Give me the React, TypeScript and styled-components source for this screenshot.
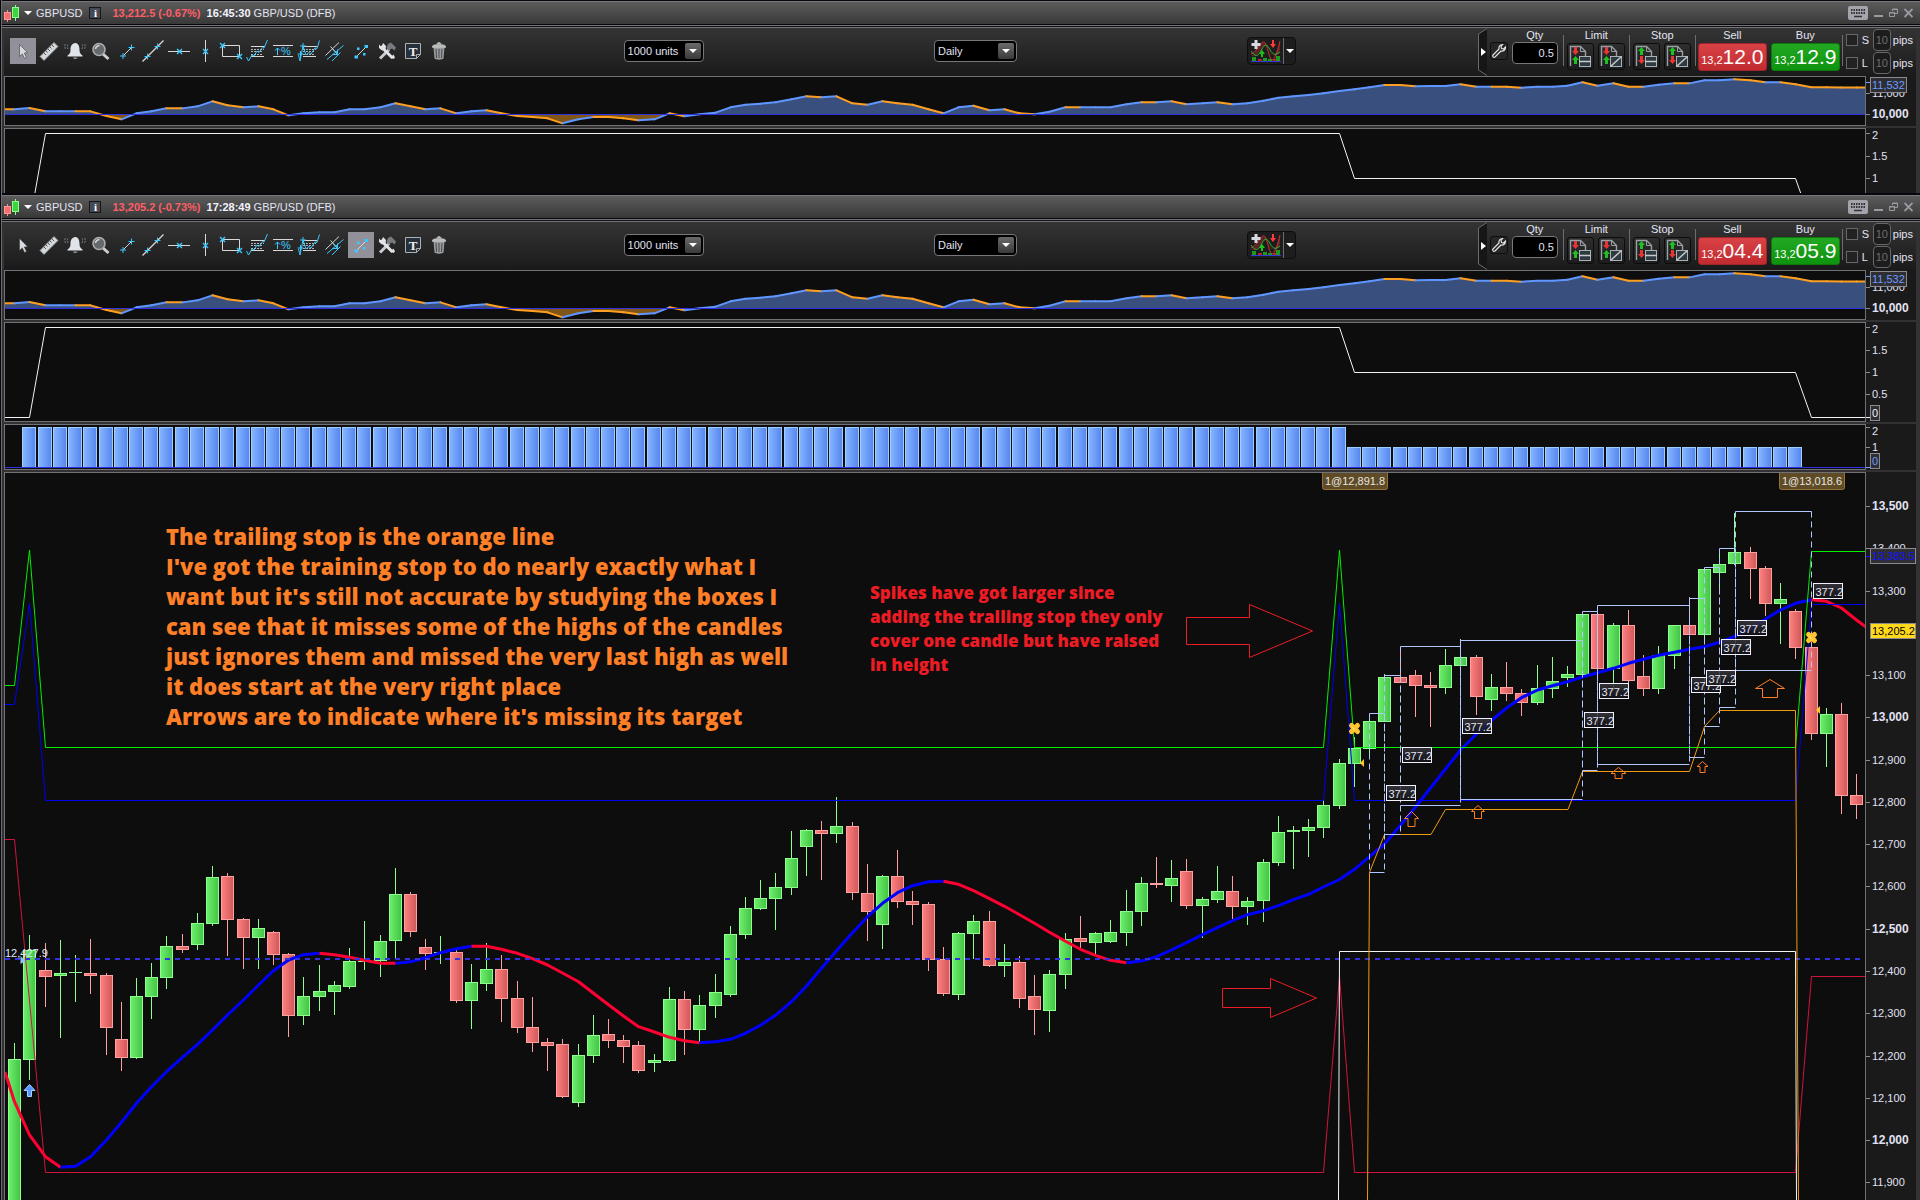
import React from "react";
import styled, { createGlobalStyle } from "styled-components";

const UI = `"Liberation Sans", Arial, sans-serif`;

const GlobalStyle = createGlobalStyle`
  * { box-sizing: border-box; }
  html, body, #root { height: 100%; }
  body { margin: 0; background: #07070c; overflow: hidden; font: 11px/14px ${UI}; color: #e4e4f4; }
  button, input, select { font: inherit; color: inherit; margin: 0; }
  svg { display: block; }
`;

/* ---------- shell ---------- */

const Page = styled.main`
  display: flex;
  flex-direction: column;
  height: 100%;
  padding-left: 1px;
`;

const Window = styled.section<{ $fill?: boolean }>`
  display: flex;
  flex-direction: column;
  flex: ${p => (p.$fill ? "1 1 0" : "none")};
  min-height: 0;
  padding: 1px 0 ${p => (p.$fill ? 0 : 1)}px;
  border-left: 1px solid #6c6c70;
  background: #07070c;
`;

const TitleBar = styled.header`
  display: flex;
  align-items: center;
  height: 23px;
  margin-bottom: 1px;
  padding: 0 7px 0 2px;
  border-top: 1px solid #77777b;
  background: linear-gradient(#5c5c5c, #383838);
`;

const Symbol = styled.button`
  display: flex;
  align-items: center;
  gap: 4px;
  padding: 0;
  border: 0;
  background: none;
`;

const InfoButton = styled.button`
  width: 12px;
  height: 12px;
  margin: 0 11px 0 7px;
  padding: 0;
  border: 1px solid #15151c;
  background: #454a55;
  color: #fff;
  font: bold 11px/10px "Liberation Serif", serif;
`;

const Quote = styled.strong<{ $down?: boolean }>`
  margin-right: ${p => (p.$down ? 6 : 3)}px;
  color: ${p => (p.$down ? "#ff5f66" : "#f4f4ff")};
`;

const WindowButtons = styled.div`
  display: flex;
  align-items: center;
  gap: 6px;
  margin-left: auto;
`;

const GhostButton = styled.button`
  padding: 0;
  border: 0;
  background: none;
  color: #9a9aa2;
`;

const Rule = styled.div`
  height: 3px;
  border-top: 1px solid #73737a;
  border-bottom: 1px solid #73737a;
  background: #111;
`;

const Body = styled.div`
  display: flex;
  flex-direction: column;
  flex: 1;
  min-height: 0;
  padding: 0 4px 0 2px;
  background: #333134;
`;

/* ---------- toolbar ---------- */

const Toolbar = styled.div`
  display: grid;
  grid-template-columns: 1fr auto 1fr;
  height: 48px;
  background: linear-gradient(#343434, #1a1a1a);
`;

const Tools = styled.div`
  display: flex;
  align-items: center;
  padding: 0 0 2px 6px;
`;

const Tool = styled.button<{ $active?: boolean }>`
  width: 26px;
  height: 26px;
  padding: 0;
  border: 0;
  background: ${p => (p.$active ? "#929199" : "none")};
`;

const Centre = styled.div`
  display: flex;
  align-items: center;
  gap: 12vw;
  padding-bottom: 2px;
`;

const Picker = styled.label<{ $w: number }>`
  display: grid;
  align-items: center;
  width: ${p => p.$w}px;
  height: 22px;
  border: 1px solid #77777c;
  border-radius: 4px;
  background: #000;
  > * { grid-area: 1 / 1; }
`;

const PickerSelect = styled.select`
  width: 100%;
  height: 20px;
  padding: 0 0 0 3px;
  border: 0;
  background: none;
  appearance: none;
  outline: 0;
`;

const PickerArrow = styled.span`
  justify-self: end;
  margin-right: 2px;
  padding: 6px 4px;
  border-radius: 2px;
  background: linear-gradient(#6a6a6a, #3a3a3a);
  pointer-events: none;
`;

const IndicatorGroup = styled.div`
  display: flex;
  width: 49px;
  height: 28px;
  border: 1px solid #0e0e0e;
  border-radius: 4px;
  background: #1d1d1d;
`;

const IndicatorButton = styled.button`
  display: grid;
  place-items: center;
  flex: none;
  width: 36px;
  padding: 0;
  border: 0;
  border-right: 1px solid #6b6b70;
  background: none;
  & + & { width: 11px; border: 0; }
`;

const Ticket = styled.form`
  display: flex;
  justify-self: end;
  padding-right: 3px;
`;

const Bracket = styled.span`
  width: 12px;
`;

const TicketGroup = styled.div<{ $w: number }>`
  display: flex;
  flex-direction: column;
  width: ${p => p.$w}px;
`;

const GroupTitle = styled.label`
  text-align: center;
`;

const GroupRow = styled.div`
  display: flex;
  justify-content: center;
  gap: 4px;
  padding-top: 1px;
`;

const Separator = styled.span<{ $gap?: number }>`
  width: 1px;
  height: 31px;
  margin: 7px 0 0 ${p => p.$gap ?? 0}px;
  background: #6b6b70;
`;

const WrenchButton = styled.button`
  display: grid;
  place-items: center;
  width: 18px;
  height: 18px;
  margin: 14px 4px 0 0;
  padding: 0;
  border: 1px solid #0e0e0e;
  border-radius: 3px;
  background: #262626;
`;

const QtyInput = styled.input`
  width: 46px;
  height: 22px;
  padding: 0 3px;
  border: 1px solid #77777c;
  border-radius: 4px;
  background: #000;
  text-align: right;
`;

const OrderButton = styled.button`
  display: grid;
  place-items: center;
  width: 27px;
  height: 27px;
  padding: 0;
  border: 1px solid #0c0c0c;
  border-radius: 3px;
  background: linear-gradient(#2e2e2e, #1c1c1c);
`;

const DealButton = styled.button<{ $side: "sell" | "buy" }>`
  width: 69px;
  height: 28px;
  padding: 0;
  border: 1px solid ${p => (p.$side === "sell" ? "#a32428" : "#0b7a0b")};
  border-radius: 3px;
  background: ${p => (p.$side === "sell" ? "linear-gradient(#d84246, #c22c30)" : "linear-gradient(#22a822, #0e930e)")};
  color: #fff;
  white-space: nowrap;
  line-height: 26px;
`;

const Pips = styled.span`
  font-size: 21px;
`;

const PipRows = styled.div`
  display: grid;
  align-content: start;
  gap: 1px;
  padding: 1px 0 0 3px;
`;

const PipRow = styled.div`
  display: grid;
  grid-template-columns: 16px 11px 20px auto;
  align-items: center;
`;

const PipCheck = styled.input`
  width: 12px;
  height: 12px;
  appearance: none;
  border: 1px solid #66666b;
  background: #222;
`;

const PipInput = styled.input`
  width: 18px;
  height: 22px;
  padding: 0;
  border: 1px solid #66666b;
  border-radius: 4px;
  background: #1c1c1c;
  color: #6e6e73;
  text-align: center;
`;

/* ---------- chart panels ---------- */

const Panel = styled.div<{ $h?: number }>`
  display: flex;
  flex: ${p => (p.$h ? `none` : "1 1 0")};
  height: ${p => (p.$h ? `${p.$h}px` : "auto")};
  min-height: 0;
  background: #1a1a1b;
  & + & { margin-top: 2px; }
`;

const Plot = styled.div<{ $open?: boolean }>`
  flex: 1;
  min-width: 0;
  border: 1px solid #727276;
  border-bottom-width: ${p => (p.$open ? 0 : 1)}px;
  background: #0d0d0d;
`;

const AxisBox = styled.div`
  width: 50px;
`;

const Drawing = styled.svg`
  width: 100%;
  height: 100%;
  font-family: ${UI};
  font-size: 11px;
`;

/* ---------- data ---------- */

const X0 = 14.75;
const STEP = 15.223;
const bx = (i: number) => Math.floor(X0 + STEP * i) + 0.5;

// Momentum line: depth from the window top, in thirds of a pixel. 343 is the 10,000 level.
const MOMENTUM = [
  328, 324, 334, 334, 334, 334.1, 348, 358, 340, 334, 325, 325.1, 319, 304, 316, 322, 319, 328, 346, 340, 337, 337, 328,
  328, 322, 310, 319, 328, 325, 340, 334, 331, 340, 348, 351, 355, 370, 358, 351, 351.1, 355, 361, 358, 340, 349, 343,
  338, 322, 314, 311, 307, 298, 289, 292, 289, 310, 314, 304, 310, 314, 328, 340, 322, 317, 331, 328, 340, 343, 335,
  322, 322.1, 322, 322, 313, 307, 307.1, 304, 313, 310, 307, 313, 310, 302, 293, 289, 285, 280, 273, 268, 262, 255,
  255.1, 259, 258, 258, 253, 260, 260, 260.1, 263, 260, 260, 257, 247, 257, 250, 260, 260.1, 254, 250, 250.1, 241, 241,
  238, 241, 247, 247, 253, 262, 262.1, 262.2, 262.3,
];

// Candles: direction, high, body top, body bottom, low — thirds of a pixel below the band's top.
type Band = { top: number; rows: string };
const BANDS: Band[] = [
  {
    top: 800,
    rows: `g 729 777 1230 1230|g 405 450 780 840|r 429 510 530 621|g 420 519 528 714|g 465 516 519 606|r 417 519 528 582|r 519 525 684 765|r 606 717 774 813|g 534 588 774 777|g 489 531 591 657|g 408 438 534 567|r 402 438 450 459|g 339 369 435 450|g 198 231 372 378|r 219 228 360 468|r 354 357 414 507|g 357 384 414 507|r 393 396 465 495|r 459 462 648 711|g 531 588 648 675|g 495 573 591 633|g 543 555 576 645|g 444 483 561 567|g 363 484 487 510|g 405 423 483 531|g 204 282 423 480|r 276 282 396 411|r 417 441 462 510|g 408 456 460 492|r 450 456 603 609|g 492 546 603 687|g 429 507 552 573|r 465 507 597 666|r 543 594 684 699|r 591 681 729 756|r 714 726 738 813|r 717 732 891 894|g 732 765 909 921|g 645 705 768 789|r 657 702 723 744|r 705 720 741 789|r 723 735 813 819`,
  },
  {
    top: 780,
    rows: `g 822 840 849 876|g 621 657 843 846|r 633 657 750 825|g 645 675 750 787|g 582 636 678 714|g 438 462 645 651|g 351 384 465 477|g 300 354 387 390|g 279 321 357 450|g 153 234 324 345|g 147 150 201 288|r 123 150 162 300|g 51 138 162 189|r 126 138 339 360|r 252 339 396 483|g 285 288 435 507|r 210 288 366 384|r 333 363 375 435|r 366 372 540 573|r 501 537 642 648|g 456 459 645 660|g 405 423 462 537|r 393 423 558 561|g 492 546 558 591|r 528 546 657 684|r 585 648 690 765|g 570 582 693 756|g 459 477 585 627|r 408 474 487 510|g 456 459 489 525|g 420 456 487 489|g 330 393 459 498|g 291 309 396 438|r 231 309 315 324|g 240 294 318 366|r 237 273 378 387|g 351 357 378 474|g 258 333 360 369|r 288 333 381 417|g 351 363 381 435|g 237 246 363 426|g 108 156 249 258|g 138 150 156 267|g 117 141 153 231|g 60 75 144 174`,
  },
  {
    top: 400,
    rows: `g 1077 1089 1218 1227|g 1012 1044 1092 1161|g 942 963 1047 1065|g 822 831 966 966|r 742 831 849 849|r 810 825 858 951|r 816 855 864 981|g 747 795 864 882|g 718 771 798 798|r 765 771 891 945|g 822 861 900 933|r 786 861 882 903|r 867 879 909 948|g 795 864 909 915|g 771 843 867 894|g 798 822 834 861|g 640 642 825 825|r 636 642 807 810|g 669 675 807 870|r 630 675 843 855|r 765 828 867 888|g 738 765 867 882|g 675 675 768 807|r 592 675 705 705|g 505 507 705 720|g 450 492 519 573|g 340 456 492 495|r 441 456 507 597|r 498 504 612 648|g 549 597 612 732|r 627 633 744 777|r 735 741 1002 1020|g 924 942 1002 1101|r 909 942 1188 1242|r 1122 1185 1215 1257`,
  },
];

const CANDLES = BANDS.flatMap(b =>
  b.rows.split("|").map(row => {
    const [dir, ...v] = row.split(" ");
    const [high, top, bottom, low] = v.map(n => Math.round(b.top + Number(n) / 3));
    return { up: dir === "g", high, top, bottom, low };
  })
);

// Moving average at each candle.
const AVERAGE = [
  1101.7, 1135, 1156.7, 1167.3, 1166.3, 1156.7, 1140, 1122.3, 1103.3, 1086.7, 1071.7, 1057.3, 1044.3, 1030, 1015, 1000,
  985, 970.7, 960, 954.7, 953.3, 954.7, 957.3, 960.3, 963.3, 963.3, 961.7, 957.7, 952.7, 948.7, 946.3, 946.3, 949.3,
  953.3, 958.7, 965, 973, 981.7, 993.3, 1004.7, 1016, 1026.7, 1032, 1037.3, 1040.7, 1042.7, 1041.7, 1039.3, 1033.3,
  1025.3, 1015.3, 1001.7, 986, 968.3, 950.7, 932.7, 916.7, 903.3, 892.7, 885.7, 881.7, 881.3, 884.3, 890.7, 898.7,
  906.3, 914.7, 923.3, 932.3, 941.3, 949.3, 955.3, 960.3, 962.7, 961, 956.7, 950, 942.7, 934.7, 927.7, 920.7, 914.7,
  910.7, 905.7, 899.7, 894.3, 887, 879.5, 869.3, 856.7, 844, 825.3, 807, 788, 769, 750, 734, 720.5, 708, 697.7, 690,
  685.7, 681.7, 677, 672.7, 668.3, 663.3, 659.3, 655.3, 652.3, 649.3, 646.7, 642.3, 636.3, 628.7, 619, 610, 603.3,
  599.7, 601.3, 608, 620,
];
const TREND_TURNS = [3, 20, 25, 30, 45, 61, 73, 118];

// Range boxes: left, right, top.
const BOXES = [
  [1369.5, 1384.5, 713.5],
  [1384.5, 1400.5, 675.5],
  [1400.5, 1460.5, 646.5],
  [1460.5, 1582.5, 640.5],
  [1582.5, 1597.5, 611.5],
  [1597.5, 1689.5, 605.5],
  [1689.5, 1704.5, 598.5],
  [1704.5, 1719.5, 567.5],
  [1719.5, 1735.5, 548.5],
  [1735.5, 1811.5, 511.5],
];
const BOX_HEIGHT = 159;

const LEVELS = [13500, 13400, 13300, 13100, 13000, 12900, 12800, 12700, 12600, 12500, 12400, 12300, 12200, 12100, 12000, 11900];
const priceY = (p: number) => Math.round(506 + (13500 - p) * 0.4227);

/* ---------- icons ---------- */

const INK = "#d8d8d8";
const SKY = "#3cc8ff";
const cross = (x: number, y: number) => `M${x - 2.5} ${y - 2.5}l5 5m0-5l-5 5`;
const plus = (x: number, y: number) => `M${x - 3} ${y}h6m-3-3v6`;
const FibRows = () => (
  <>
    <path d="M7 8.500h14M7 18.500h13" stroke={INK} />
    <path d="M7 11.500h13M7 13.500h12M7 16.500h11" stroke="#b4b4b4" strokeDasharray="2 1" />
  </>
);

const ICONS: { name: string; art: React.ReactNode }[] = [
  { name: "Pointer", art: <path d="M9.500 6.500v12l2.800-2.600 2.200 4.600 2-1-2.200-4.500 3.400-.3z" fill="#d6dade" stroke="#3a4046" strokeWidth=".6" /> },
  {
    name: "Ruler",
    art: (
      <>
        <path d="M4 18.500L18 4.500l4 4L8 22.500z" fill="#d4d8da" stroke="#8b9094" strokeWidth=".8" />
        <path d="M8 15l2 2m0-4l1.500 1.500M12 11l2 2m0-4l1.500 1.500M16 7l2 2" stroke="#555" fill="none" />
      </>
    ),
  },
  {
    name: "Alert",
    art: (
      <>
        <path d="M13.500 5c-4 .5-5 3-5 7 0 3-1 4-3 5.500v1h15v-1c-2-1.500-3-2.500-3-5.500 0-4-1-6.500-4-7z" fill="#e0e4e8" />
        <path d="M11 19.500h4.500c-.5 2-4 2-4.500 0z" fill="#8d949b" />
        <path d="M6 6.500c-1 1-1 3 0 4.500M3.500 6c-1 1.500-1 3.500 0 5M20 6.500c1 1 1 3 0 4.500M22.500 6c1 1.500 1 3.500 0 5" stroke="#7c8288" strokeDasharray="2 1" fill="none" />
      </>
    ),
  },
  {
    name: "Zoom",
    art: (
      <>
        <path d="M15 16l5.500 5" stroke="#cfcfcf" strokeWidth="3" />
        <circle cx="11" cy="11.500" r="6" fill="#66696c" stroke="#a9adb0" strokeWidth="1.600" />
        <path d="M7.500 11c.3-2 1.800-3.300 4-3.500" stroke="#d8d8d8" fill="none" strokeWidth="1.500" />
      </>
    ),
  },
  { name: "Trend segment", art: <><path d="M9.500 17.500l8-8" stroke={INK} /><path d={plus(9, 18) + plus(17.500, 9.500)} stroke={SKY} /></> },
  { name: "Trend line", art: <><path d="M2.500 23.500l21-21" stroke={INK} strokeWidth="1.300" /><path d={plus(7.500, 18.500) + plus(17.500, 8.500)} stroke={SKY} /></> },
  { name: "Horizontal line", art: <><path d="M2 13.500h22" stroke={INK} /><path d={cross(13.500, 13.500)} stroke={SKY} strokeWidth="1.400" /></> },
  { name: "Vertical line", art: <><path d="M13.500 2v22" stroke={INK} /><path d={cross(13.500, 13.500)} stroke={SKY} strokeWidth="1.400" /></> },
  { name: "Rectangle", art: <><path d="M4.500 7.500h17v11h-17z" stroke={INK} fill="none" /><path d={cross(4.500, 7.500) + cross(21.500, 18.500)} stroke={SKY} strokeWidth="1.400" /></> },
  { name: "Fibonacci retracement", art: <><FibRows /><path d="M2.500 19l2 4 3.500-6 2 1 3-5 2 1.500 3.500-5 1.500 .5 3.500-8" stroke={SKY} fill="none" /></> },
  {
    name: "Percentage change",
    art: (
      <>
        <path d="M3 7.500h20M3 18.500h20" stroke={INK} />
        <path d="M7.500 17v-7M5 12.500l2.500-2.500 2.500 2.500" stroke={SKY} fill="none" />
        <text x="11" y="17" fontSize="11" fill={SKY} fontFamily="Liberation Sans, sans-serif">%</text>
      </>
    ),
  },
  { name: "Fibonacci extension", art: <><FibRows /><path d="M2.500 17l1.500 6 3-15 3 9 3-2.500 2 1.500 4-6 2 .5 2.500-8" stroke={SKY} fill="none" /><path d={plus(7, 8) + plus(4.500, 16)} stroke={SKY} /></> },
  {
    name: "Channel",
    art: (
      <>
        <path d="M3.500 17.500l13.500-13M8.500 8.500l7 7.500" stroke={INK} fill="none" />
        <path d="M5 21.500l16.500-14M11 11.500l4.500 5v-5M15.500 16.500h-5M10 23l8.500-8.500" stroke={SKY} fill="none" />
      </>
    ),
  },
  {
    name: "Regression",
    art: (
      <>
        <path d="M9 18l9-9" stroke={INK} />
        <path d="M6.500 17.500h3.500v3h-3.500zM16.500 7h3.500v3h-3.500zM9 9.500h2.500v2.500h-2.500zM15 15h2.500v2.500h-2.500z" fill={SKY} />
      </>
    ),
  },
  {
    name: "Settings",
    art: (
      <>
        <path d="M6 20.500l9-9" stroke="#c9ccd0" strokeWidth="3" />
        <path d="M14 6l3-1.500 5 5-1.500 3-2.500-2-3.500 2-2-2.500z" fill="#777b80" />
        <path d="M7.500 9l11 11" stroke="#e2e4e6" strokeWidth="3" />
        <path d="M5 6.500v3.500l3 2.500 3.500-1 .5-3.500-3-3-1 2.500-1.500.5z" fill="#e2e4e6" />
        <path d="M16.500 19.500l3 1.500 1.500-1.500-1.500-3" fill="#e2e4e6" />
      </>
    ),
  },
  {
    name: "Text note",
    art: (
      <>
        <path d="M5.500 5.500h15v11l-4 4h-11z" fill="#27303a" stroke="#a9b0b6" />
        <path d="M16.500 20.500v-4h4z" fill="#27303a" stroke="#a9b0b6" />
        <text x="13" y="17.500" fontSize="13" fontWeight="bold" textAnchor="middle" fill="#eee" fontFamily="Liberation Serif, serif">T</text>
      </>
    ),
  },
  {
    name: "Delete",
    art: (
      <>
        <path d="M7.500 9.500h11l-1 11c-1 1.500-8 1.500-9 0z" fill="#9a9da0" />
        <path d="M6.500 8c1-2 12-2 13 0v1.500h-13zM11 6c0-2 4-2 4 0" fill="#b9bcbf" stroke="#d0d0d0" strokeWidth=".6" />
        <path d="M10 11l.5 9M13 11v9M16 11l-.5 9" stroke="#44474a" />
      </>
    ),
  },
];

const Triangle = () => (
  <svg width="8" height="4" viewBox="0 0 8 4"><path d="M0 0h8L4 4z" fill="#fff" /></svg>
);

const CandleIcon = () => (
  <svg width="16" height="17" viewBox="0 0 16 17">
    <path d="M3.500 5v12" stroke="#ff8a8a" />
    <rect x=".5" y="7.500" width="6" height="7" fill="#f76d6d" stroke="#ff9a9a" />
    <path d="M11.500 0v16" stroke="#8aff8a" />
    <rect x="8.500" y="2.500" width="6" height="10" fill="#3fd43f" stroke="#8aff8a" />
  </svg>
);

const OrderIcon = ({ top, bottom, inward, plain }: { top: string; bottom: string; inward: boolean; plain: boolean }) => {
  const down = "M0 4h2V0h3v4h2L3.500 8z";
  const up = "M0 4L3.500 0 7 4H5v4H2V4z";
  return (
    <svg width="23" height="23" viewBox="0 0 23 23">
      <path d="M1.500 21V1.500h10l5 5V11" fill="none" stroke="#98a0a6" strokeWidth="1.400" />
      <path d="M11.500 1.500v5h5" fill="none" stroke="#98a0a6" />
      <rect x="10.500" y="11.500" width="11" height="10" fill="#2e3a42" stroke="#aab0b4" />
      <path d={plain ? "M10 16.500h12" : "M10.500 21.500l11-10"} stroke="#c6cacc" strokeWidth="1.500" />
      <g transform="translate(3 2)"><path d={inward ? down : up} fill={top} /></g>
      <g transform="translate(3 11)"><path d={inward ? up : down} fill={bottom} /></g>
    </svg>
  );
};

const IndicatorIcon = () => (
  <svg width="30" height="24" viewBox="0 0 30 24">
    <path d="M0 16c6 0 8-14 13-12s5 13 9 12 5-8 7-14v10c-3 6-6 6-9 2S15 4 12 8 6 20 0 16z" fill="#5c2328" />
    <path d="M0 15c5-1 8-10 12-12s6 18 9 18 6-10 8-19" fill="none" stroke="#d03030" />
    <path d="M0 12c4 6 7 6 10 0s5-8 8-3 5 9 11 4" fill="none" stroke="#2fb42f" />
    <path d="M3.500 1h3v3h3v3h-3v3h-3V7h-3V4h3z" fill="#d6dade" />
    <path d="M8 15l3-4 3 4h-2v3h-2v-3z" fill="#18c418" />
    <path d="M19 5l3 4 3-4h-2V1h-2v4z" fill="#ff3a3a" />
    <path d="M1 18h4v4H1zM12 19h4v3h-4zM17 20h4v2h-4zM25 17h4v5h-4z" fill="#1d9a1d" />
    <path d="M7 20h4v2H7zM22 20h3v2h-3z" fill="#b02828" />
    <path d="M0 22.500h30" stroke="#3434d8" />
  </svg>
);

/* ---------- chart drawings ---------- */

const Momentum = ({ id }: { id: string }) => {
  const pts = MOMENTUM.map((t, i) => [bx(i), t / 3] as const);
  const all: (readonly [number, number])[] = [[5, 109.3], ...pts, [1866, 87.5]];
  const area = `M5 114.500 ${all.map(p => `L${p[0]} ${p[1]}`).join(" ")} L1866 114.500Z`;
  return (
    <Drawing viewBox="5 77 1860 48" preserveAspectRatio="xMaxYMin slice">
      <clipPath id={`${id}-over`}><rect x="0" y="77" width="1870" height="37.500" /></clipPath>
      <clipPath id={`${id}-under`}><rect x="0" y="114.500" width="1870" height="20" /></clipPath>
      <path d={area} fill="#39507f" clipPath={`url(#${id}-over)`} />
      <path d={area} fill="#80551a" clipPath={`url(#${id}-under)`} />
      {all.slice(1).map((p, i) => (
        <path key={i} d={`M${all[i][0]} ${all[i][1]}L${p[0]} ${p[1]}`} stroke={p[1] > all[i][1] ? "#ff9f22" : "#5f96ff"} strokeWidth="2" strokeLinecap="round" />
      ))}
      <path d="M0 114.500h1870" stroke="#3030e0" />
    </Drawing>
  );
};

const Position = ({ height }: { height: number }) => (
  <Drawing viewBox={`5 129 1860 ${height}`} preserveAspectRatio="xMaxYMin slice">
    <path
      d={`M0 223.500H${bx(1)}L${bx(2)} 133.500H${bx(87)}L${bx(88)} 178.500H${bx(117)}L${bx(118)} 223.500H1870`}
      fill="none"
      stroke="#f2f2f2"
    />
  </Drawing>
);

const Bars = () => (
  <Drawing viewBox="5 425 1860 44" preserveAspectRatio="xMaxYMin slice">
    <linearGradient id="bar"><stop stopColor="#86b6ff" /><stop offset="1" stopColor="#5685ee" /></linearGradient>
    {Array.from({ length: 117 }, (_, k) => k + 1).map(i => {
      const y = i < 88 ? 427.500 : 447.500;
      return <rect key={i} x={bx(i) - 7} y={y} width="13" height={467.500 - y} fill="url(#bar)" stroke="#9ccfff" />;
    })}
    <path d="M0 467.500h1870" stroke="#3030e0" />
  </Drawing>
);

const range = (a: number, b: number) => Array.from({ length: b - a + 1 }, (_, k) => a + k);

const Average = () => {
  const stops = [0, ...TREND_TURNS, 121];
  return (
    <g fill="none" strokeWidth="3" strokeLinejoin="round">
      {stops.slice(1).map((end, n) => {
        const pts = range(stops[n], end).map(i => `${bx(i)} ${AVERAGE[i]}`);
        if (n === 0) pts.unshift("5 1072");
        if (end === 121) pts.push("1866 627");
        return <path key={n} d={`M${pts.join("L")}`} stroke={n % 2 ? "#0000ff" : "#ff0033"} />;
      })}
    </g>
  );
};

const upArrow = (cx: number, top: number, w: number, shaft: number, head: number, h: number) =>
  `M${cx} ${top}l${w / 2} ${head}h${(shaft - w) / 2}v${h - head}h${-shaft}v${head - h}h${(shaft - w) / 2}z`;

const RangeBox = ({ box }: { box: number[] }) => {
  const [l, r, t] = box;
  return (
    <>
      <path d={`M${l} ${t}H${r}M${l} ${t + BOX_HEIGHT}H${r}`} stroke="#b4c6ff" />
      <path d={`M${l} ${t}v${BOX_HEIGHT}M${r} ${t}v${BOX_HEIGHT}`} stroke="#b4c6ff" strokeDasharray="6 4" />
    </>
  );
};

const Note = ({ x, y, size, leading, color, lines }: { x: number; y: number; size: number; leading: number; color: string; lines: string[] }) => (
  <text fill={color} fontSize={size} fontWeight="800" fontFamily='"Open Sans", sans-serif'>
    {lines.map((line, i) => <tspan key={line} x={x} y={y + i * leading}>{line}</tspan>)}
  </text>
);

const SignalLine = ({ start, peak, base, end, color }: { start: number; peak?: number; base: number; end: number; color: string }) => (
  <path
    d={`M5 ${start}H${bx(0)}${peak ? `L${bx(1)} ${peak}` : ""}L${bx(2)} ${base}H${bx(86)}L${bx(87)} ${peak ?? end}L${bx(88)} ${base}H${bx(117)}L${bx(118)} ${end}H1870`}
    stroke={color}
    fill="none"
  />
);

const PriceChart = () => (
  <Drawing viewBox="5 473 1860 727" preserveAspectRatio="xMaxYMin slice">
    <linearGradient id="up"><stop stopColor="#6cf06c" /><stop offset="1" stopColor="#44c244" /></linearGradient>
    <linearGradient id="down"><stop stopColor="#ff8080" /><stop offset="1" stopColor="#cf5858" /></linearGradient>
    <linearGradient id="tag" x2="0" y2="1"><stop stopColor="#3a3a40" /><stop offset="1" stopColor="#111115" /></linearGradient>

    {CANDLES.map((c, i) => {
      const x = bx(i);
      const line = c.up ? "#8cff8c" : "#ffa0a0";
      return (
        <g key={i} stroke={line}>
          <path d={`M${x} ${c.high}V${c.low}`} />
          {c.bottom - c.top < 2
            ? <path d={`M${x - 6.500} ${c.top + 0.500}h13`} />
            : <rect x={x - 6} y={c.top + 0.500} width="12" height={c.bottom - c.top - 1} fill={c.up ? "url(#up)" : "url(#down)"} />}
        </g>
      );
    })}

    <Average />
    <path d="M5 959h1860" stroke="#3232e0" strokeWidth="2" strokeDasharray="5 5" />
    <SignalLine start={839.5} base={1172.500} end={976.500} color="#d0143c" />
    <SignalLine start={704.5} peak={603.500} base={800.500} end={604.500} color="#0000f0" />
    <SignalLine start={685.5} peak={550} base={747.500} end={551.500} color="#00f000" />
    <path d="M1338.500 1200L1339.500 951.500H1795.500L1796.500 1200" stroke="#f4f4f4" fill="none" />
    <path
      d="M1367.500 1200L1369.500 872.500 1384.500 834.500H1431L1445.500 809.500H1568L1582.500 771.500H1689.500L1704.500 726.500 1719.500 710.500H1795.500L1798.500 1200"
      stroke="#f09a10"
      fill="none"
    />
    {BOXES.map(b => <RangeBox key={b[0]} box={b} />)}

    {BOXES.map(b => (
      <g key={b[0]}>
        <rect x={b[1] + 2} y={b[2] + 72} width="29" height="15" fill="url(#tag)" fillOpacity=".85" stroke="#f0f0ff" />
        <text x={b[1] + 4} y={b[2] + 84} fill="#e4e4f4">377.2</text>
      </g>
    ))}

    {[[1354.5, 728.5], [1811.5, 637.5]].map(([x, y]) => (
      <g key={x} fill="#ffc42e">
        <path d={`M${x - 3} ${y - 3}l6 6m0-6l-6 6`} stroke="#ffc42e" strokeWidth="5" strokeLinecap="round" />
        <path d={`M${x - 3} ${y - 2}l4 4`} stroke="#ffe28a" />
      </g>
    ))}
    <path d="M1364 759v8l-4-4zM1820 706v8l-4-4z" fill="#ffc42e" />
    <path d={upArrow(29.5, 1084.500, 11, 4, 6, 12)} fill="#5a94ff" stroke="#a6d2ff" />
    <path d="M20.500 956v8l5-3z" fill="#8fc4ff" />
    <text x="5" y="957" fill="#dfe6ff">12,427.9</text>

    <g fill="none" stroke="#ff7f27">
      <path d={upArrow(1770, 679.500, 29, 15, 9, 18)} />
      <path d={upArrow(1618.5, 767.500, 15, 7, 6, 11)} />
      <path d={upArrow(1702.5, 761.500, 11, 5, 5, 11)} />
      <path d={upArrow(1411.5, 811.500, 14, 7, 7, 15)} />
      <path d={upArrow(1478, 805.500, 13, 7, 6, 13)} />
    </g>
    <g fill="none" stroke="#ed1c24">
      <path d="M1186.500 617.500H1249.500V604.500L1312.500 631 1249.500 657.500V644.500H1186.500z" />
      <path d="M1222.500 988.500H1270.500V978.500L1316.500 998 1270.500 1017.500V1007.500H1222.500z" />
    </g>

    <Note
      x={166}
      y={545}
      size={22}
      leading={30}
      color="#ff7f27"
      lines={[
        "The trailing stop is the orange line",
        "I've got the training stop to do nearly exactly what I",
        "want but it's still not accurate by studying the boxes I",
        "can see that it misses some of the highs of the candles",
        "just ignores them and missed the very last high as well",
        "it does start at the very right place",
        "Arrows are to indicate where it's missing its target",
      ]}
    />
    <Note
      x={870}
      y={599}
      size={17}
      leading={24}
      color="#ed1c24"
      lines={["Spikes have got larger since", "adding the trailing stop they only", "cover one candle but have raised", "in height"]}
    />

    {[[1322.5, "1@12,891.8"], [1779.5, "1@13,018.6"]].map(([x, label]) => (
      <g key={label}>
        <rect x={x} y="470.500" width="65" height="19" rx="2" fill="#5f4c26" stroke="#94733a" />
        <text x={Number(x) + 32.5} y="485" textAnchor="middle" fill="#e8e4e0">{label}</text>
      </g>
    ))}
  </Drawing>
);

/* ---------- axes ---------- */

type Mark = { y: number; text: string; at?: number; bold?: boolean };
type Tag = { y: number; w: number; text: string; color: string; fill?: string; tick?: number };

const Axis = ({ top, height, marks, tags = [] }: { top: number; height: number; marks: Mark[]; tags?: Tag[] }) => (
  <AxisBox>
    <Drawing viewBox={`0 ${top} 50 ${height}`} preserveAspectRatio="xMinYMin slice">
      {marks.map(m => (
        <g key={m.text}>
          <path d={`M0 ${m.y + 0.500}h4`} stroke="#8a8a90" />
          <text x="6" y={(m.at ?? m.y) + 4} fill="#e2e2f2" fontSize={m.bold ? 12 : 11} fontWeight={m.bold ? "bold" : "normal"}>{m.text}</text>
        </g>
      ))}
      {tags.map(t => (
        <g key={t.text}>
          {t.tick && <path d={`M0 ${t.tick + 0.500}h4`} stroke={t.color} />}
          <rect x="4.500" y={t.y + 0.500} width={t.w} height="15" fill={t.fill ?? "#2f2f33"} stroke="#8a8a90" />
          <text x="6" y={t.y + 12} fill={t.color}>{t.text}</text>
        </g>
      ))}
    </Drawing>
  </AxisBox>
);

const momentumAxis = (
  <Axis
    top={76}
    height={50}
    marks={[{ y: 93, text: "11,000" }, { y: 114, text: "10,000", bold: true }]}
    tags={[{ y: 77, w: 36, text: "11,532", color: "#6c9cff", tick: 82 }]}
  />
);

/* ---------- window chrome ---------- */

type Trade = { sell: string; buy: string };

const OrderTicket = ({ id, sell, buy }: Trade & { id: string }) => (
  <Ticket onSubmit={e => e.preventDefault()}>
    <Bracket>
      <svg width="12" height="48" viewBox="0 0 12 48">
        <path d="M9 .5L.500 6v36l8.500 5.500" fill="#161616" stroke="#6b6b70" />
        <path d="M3 20l5 4-5 4z" fill="#fff" />
      </svg>
    </Bracket>
    <WrenchButton type="button" aria-label="Ticket settings">
      <svg width="16" height="16" viewBox="0 0 16 16">
        <path d="M2 12l6-6c-.5-2.500 1-4.500 3.500-4.500L10 3.500l.5 2 2 .5L14.500 4c.3 2.800-2 4.500-4.500 4l-6 6c-1.500 1-3-.8-2-2z" fill="none" stroke="#e0e0e0" strokeWidth="1.200" />
      </svg>
    </WrenchButton>
    <TicketGroup $w={46}>
      <GroupTitle htmlFor={`${id}-qty`}>Qty</GroupTitle>
      <QtyInput id={`${id}-qty`} defaultValue="0.5" />
    </TicketGroup>
    <Separator $gap={5} />
    {(["Limit", "Stop"] as const).map(kind => {
      const limit = kind === "Limit";
      const top = limit ? "#e83434" : "#1fc01f";
      const bottom = limit ? "#1fc01f" : "#e83434";
      return (
        <React.Fragment key={kind}>
          <TicketGroup $w={65} role="group" aria-label={kind}>
            <GroupTitle as="span">{kind}</GroupTitle>
            <GroupRow>
              <OrderButton type="button" aria-label={`${kind} order`}><OrderIcon top={top} bottom={bottom} inward={limit} plain /></OrderButton>
              <OrderButton type="button" aria-label={`${kind} order at price`}><OrderIcon top={top} bottom={bottom} inward={limit} plain={false} /></OrderButton>
            </GroupRow>
          </TicketGroup>
          <Separator />
        </React.Fragment>
      );
    })}
    <TicketGroup $w={73}>
      <GroupTitle as="span">Sell</GroupTitle>
      <GroupRow><DealButton type="button" $side="sell">13,2<Pips>{sell}</Pips></DealButton></GroupRow>
    </TicketGroup>
    <TicketGroup $w={73}>
      <GroupTitle as="span">Buy</GroupTitle>
      <GroupRow><DealButton type="button" $side="buy">13,2<Pips>{buy}</Pips></DealButton></GroupRow>
    </TicketGroup>
    <Separator />
    <PipRows>
      {["S", "L"].map(side => (
        <PipRow key={side}>
          <PipCheck type="checkbox" id={`${id}-${side}`} />
          <label htmlFor={`${id}-${side}`}>{side}</label>
          <PipInput id={`${id}-${side}-pips`} defaultValue="10" />
          <label htmlFor={`${id}-${side}-pips`}>pips</label>
        </PipRow>
      ))}
    </PipRows>
  </Ticket>
);

const Chooser = ({ label, value, width }: { label: string; value: string; width: number }) => (
  <Picker $w={width}>
    <PickerSelect aria-label={label} defaultValue={value}><option>{value}</option></PickerSelect>
    <PickerArrow><Triangle /></PickerArrow>
  </Picker>
);

type Chrome = Trade & { id: string; price: string; time: string; active: string; fill?: boolean; children: React.ReactNode };

const ChartWindow = ({ id, price, time, active, fill, sell, buy, children }: Chrome) => (
  <Window $fill={fill} aria-label={`GBPUSD chart ${time}`}>
    <TitleBar>
      <Symbol type="button"><CandleIcon /><Triangle />GBPUSD</Symbol>
      <InfoButton type="button" aria-label="Market information">i</InfoButton>
      <Quote $down>{price}</Quote>
      <Quote>{time}</Quote>
      <span>GBP/USD (DFB)</span>
      <WindowButtons>
        <GhostButton type="button" aria-label="Keyboard">
          <svg width="20" height="15" viewBox="0 0 20 15">
            <rect width="20" height="14" rx="2" fill="#a4a4ac" />
            <path d="M3 4h14M3 7h14" stroke="#333" strokeWidth="2" strokeDasharray="1.500 1" />
            <path d="M6 10.500h8" stroke="#333" strokeWidth="1.500" />
          </svg>
        </GhostButton>
        <GhostButton type="button" aria-label="Minimise">
          <svg width="9" height="10" viewBox="0 0 9 10"><path d="M0 8h9" stroke="currentColor" strokeWidth="2" /></svg>
        </GhostButton>
        <GhostButton type="button" aria-label="Restore">
          <svg width="9" height="10" viewBox="0 0 9 10"><path d="M3.500 3V1h5v4.500H6M.500 4.500h5v4h-5zM0 5h6M3 1.500h6" stroke="currentColor" fill="none" /></svg>
        </GhostButton>
        <GhostButton type="button" aria-label="Close">
          <svg width="9" height="10" viewBox="0 0 9 10"><path d="M.500 1l8 8m0-8l-8 8" stroke="currentColor" strokeWidth="1.800" /></svg>
        </GhostButton>
      </WindowButtons>
    </TitleBar>
    <Rule />
    <Body>
      <Toolbar>
        <Tools>
          {ICONS.map(icon => (
            <Tool key={icon.name} type="button" aria-label={icon.name} $active={icon.name === active}>
              <svg width="26" height="26" viewBox="0 0 26 26">{icon.art}</svg>
            </Tool>
          ))}
        </Tools>
        <Centre>
          <Chooser label="Units" value="1000 units" width={80} />
          <Chooser label="Interval" value="Daily" width={83} />
          <IndicatorGroup>
            <IndicatorButton type="button" aria-label="Add indicator"><IndicatorIcon /></IndicatorButton>
            <IndicatorButton type="button" aria-label="Indicator list"><Triangle /></IndicatorButton>
          </IndicatorGroup>
        </Centre>
        <OrderTicket id={id} sell={sell} buy={buy} />
      </Toolbar>
      {children}
    </Body>
  </Window>
);

export default function App() {
  return (
    <>
      <GlobalStyle />
      <Page>
        <ChartWindow id="a" price="13,212.5 (-0.67%)" time="16:45:30" active="Pointer" sell="12.0" buy="12.9">
          <Panel $h={50}><Plot><Momentum id="m1" /></Plot>{momentumAxis}</Panel>
          <Panel $h={65}>
            <Plot $open><Position height={64} /></Plot>
            <Axis top={128} height={65} marks={[{ y: 133, at: 135, text: "2" }, { y: 156, text: "1.5" }, { y: 178, text: "1" }]} />
          </Panel>
        </ChartWindow>
        <ChartWindow id="b" fill price="13,205.2 (-0.73%)" time="17:28:49" active="Regression" sell="04.4" buy="05.9">
          <Panel $h={50}><Plot><Momentum id="m2" /></Plot>{momentumAxis}</Panel>
          <Panel $h={100}>
            <Plot><Position height={98} /></Plot>
            <Axis
              top={128}
              height={100}
              marks={[{ y: 133, at: 135, text: "2" }, { y: 156, text: "1.5" }, { y: 178, text: "1" }, { y: 200, text: "0.5" }]}
              tags={[{ y: 211, w: 9, text: "0", color: "#f2f2f2", tick: 223 }]}
            />
          </Panel>
          <Panel $h={46}>
            <Plot><Bars /></Plot>
            <Axis
              top={424}
              height={46}
              marks={[{ y: 427, at: 431, text: "2" }, { y: 447, text: "1" }]}
              tags={[{ y: 453, w: 9, text: "0", color: "#6c9cff", tick: 467 }]}
            />
          </Panel>
          <Panel>
            <Plot $open><PriceChart /></Plot>
            <Axis
              top={472}
              height={728}
              marks={LEVELS.map(p => ({ y: priceY(p), text: p.toLocaleString("en-US"), bold: p % 500 === 0 }))}
              tags={[
                { y: 548, w: 45, text: "13,383.5", color: "#1010ff", tick: 556 },
                { y: 623, w: 45, text: "13,205.2", color: "#000", fill: "#ffd91a" },
              ]}
            />
          </Panel>
        </ChartWindow>
      </Page>
    </>
  );
}
